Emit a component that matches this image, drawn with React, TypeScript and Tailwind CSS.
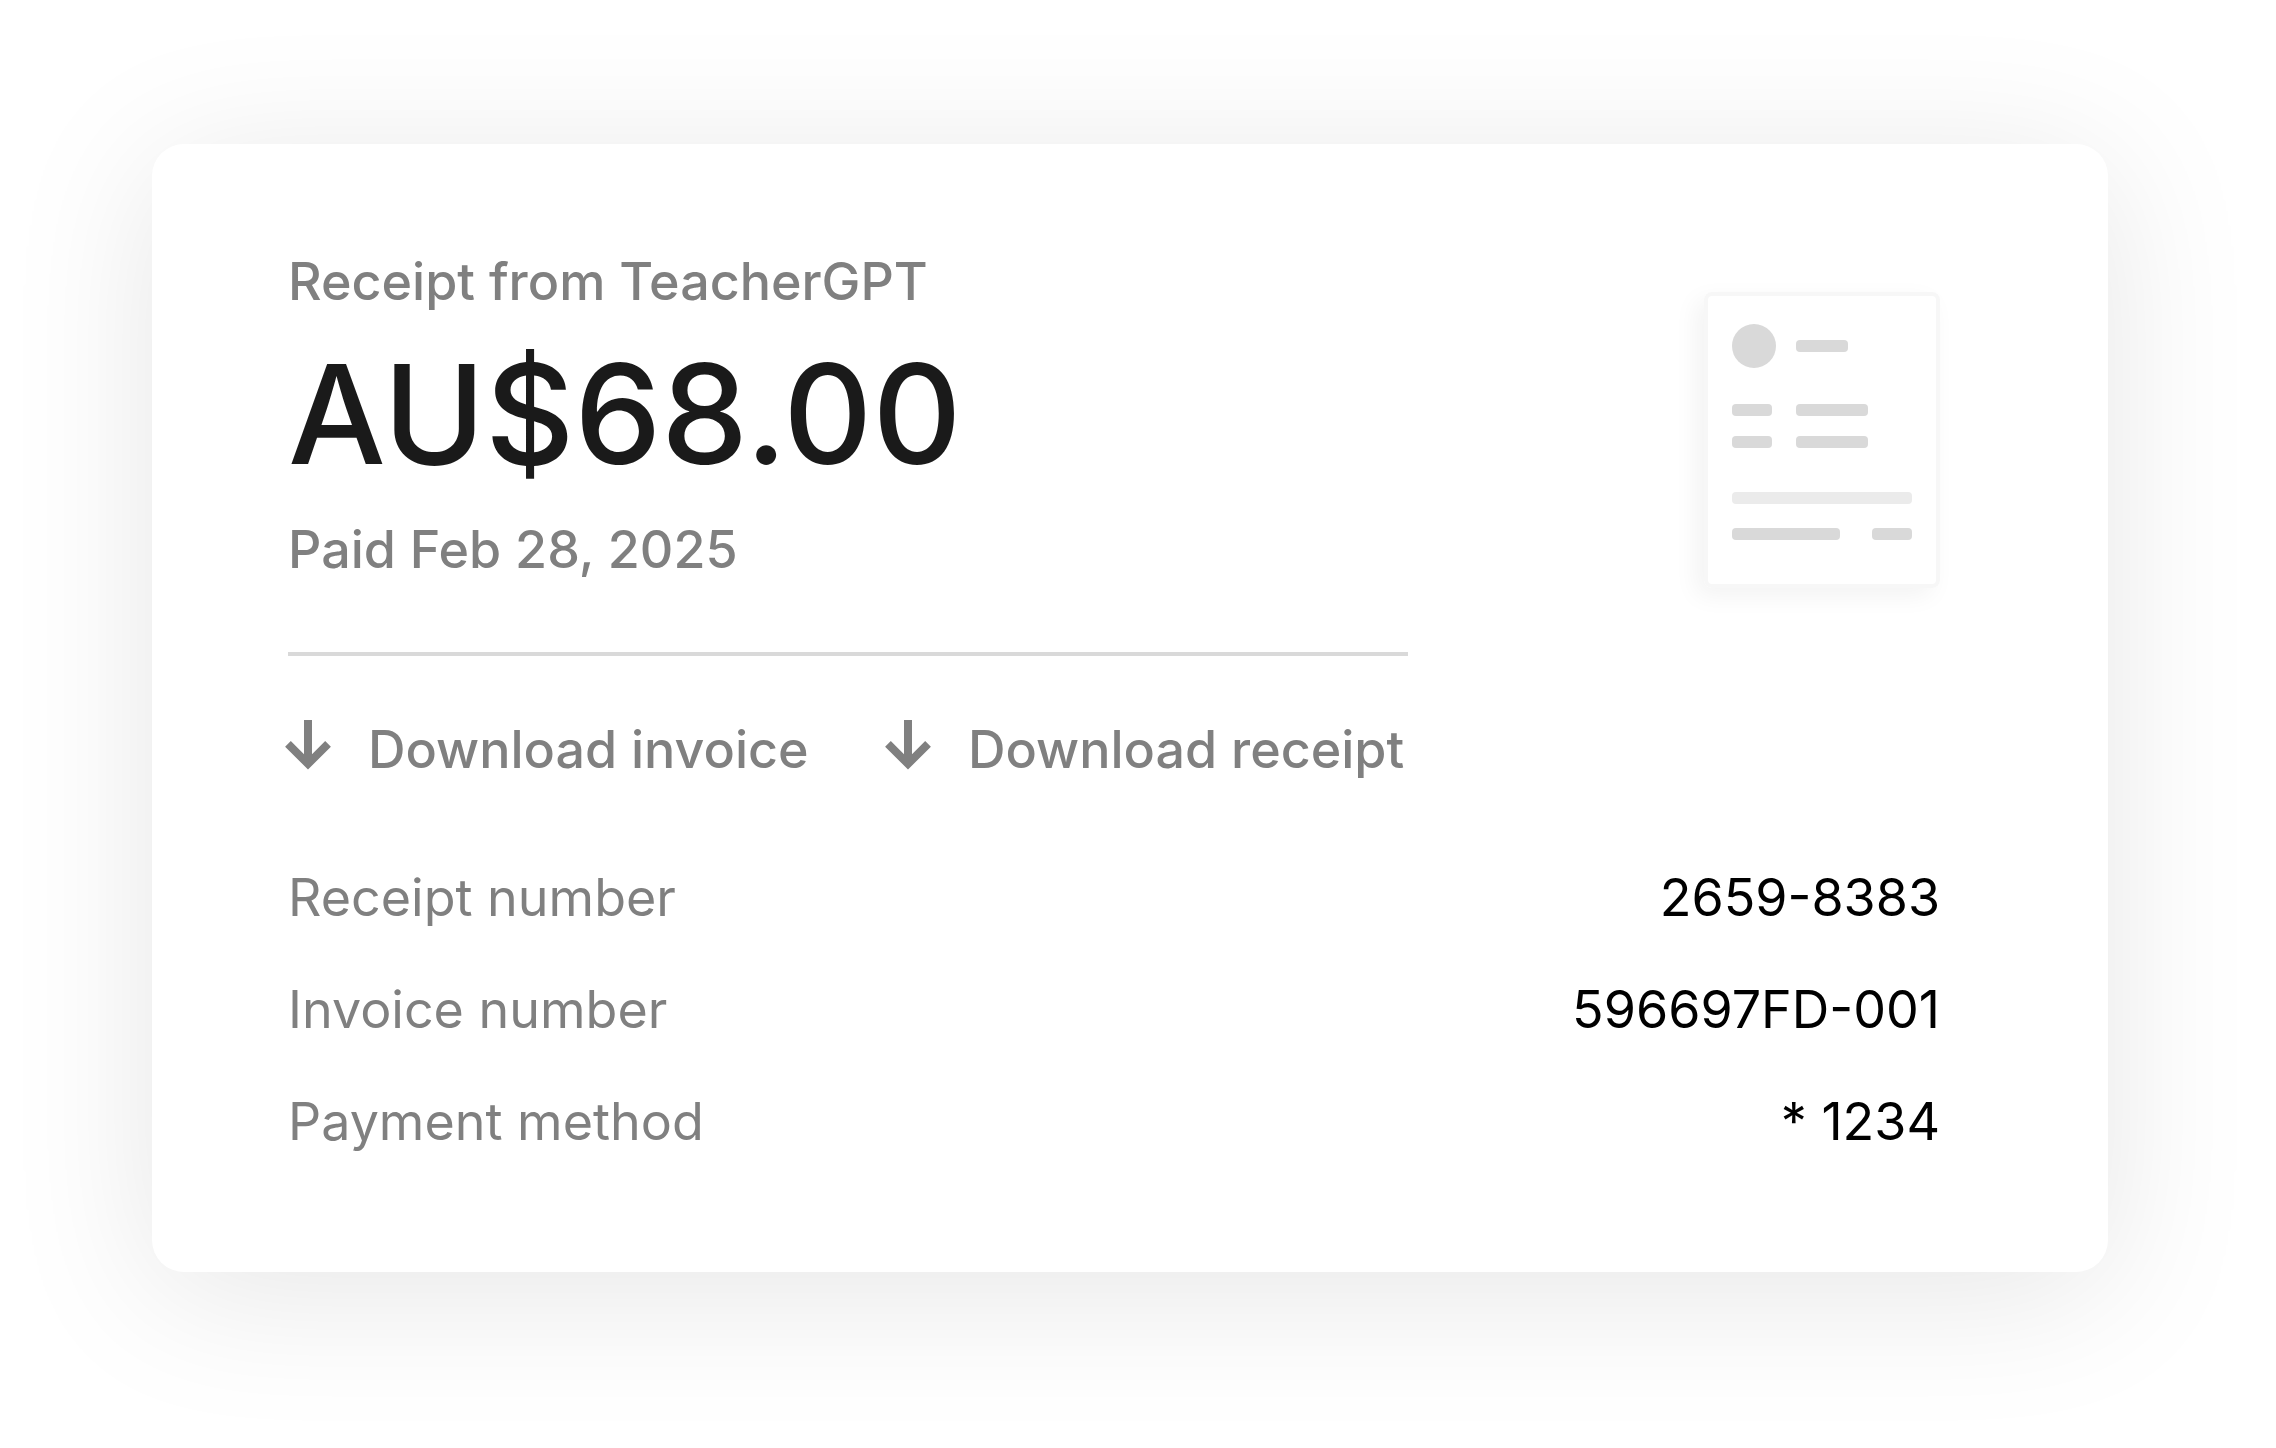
const details = [
  { label: "Receipt number", value: "2659-8383" },
  { label: "Invoice number", value: "596697FD-001" },
  { label: "Payment method", value: "* 1234" },
];

function DownArrow() {
  return (
    <svg aria-hidden="true" viewBox="0 0 40 64" className="h-16 w-10 shrink-0 overflow-visible" fill="#808080">
      <path d="M16 2h8v34.3l13.2-13.2 5.7 5.7L20 51.5-2.9 28.8l5.7-5.7L16 36.3z" />
    </svg>
  );
}

function DownloadLink({ children }: { children: string }) {
  return (
    <a href="#" className="flex items-center gap-10 font-medium whitespace-nowrap">
      <DownArrow />
      {children}
    </a>
  );
}

function ReceiptIllustration() {
  return (
    <div className="mt-[42px] shrink-0 rounded-lg shadow-[-8px_8px_24px_rgba(0,0,0,0.05)]">
      <svg aria-hidden="true" viewBox="0 0 236 296" className="w-[236px]">
        <rect width="236" height="296" rx="8" fill="#f7f7f7" />
        <rect x="4" y="4" width="228" height="288" rx="4" fill="#ffffff" />
        <g fill="#d9d9d9">
          <circle cx="50" cy="54" r="22" />
          <rect x="92" y="48" width="52" height="12" rx="4" />
          <rect x="28" y="112" width="40" height="12" rx="4" />
          <rect x="92" y="112" width="72" height="12" rx="4" />
          <rect x="28" y="144" width="40" height="12" rx="4" />
          <rect x="92" y="144" width="72" height="12" rx="4" />
          <rect x="28" y="236" width="108" height="12" rx="4" />
          <rect x="168" y="236" width="40" height="12" rx="4" />
        </g>
        <rect x="28" y="200" width="180" height="12" rx="4" fill="#ebebeb" />
      </svg>
    </div>
  );
}

export default function App() {
  return (
    <main className="min-h-screen bg-white px-[152px] pt-36 pb-44 font-['Inter',sans-serif] text-[52px] leading-16 text-[#808080]">
      <section className="mr-4 rounded-[32px] bg-white pt-[106px] pr-[168px] pb-[118px] pl-[136px] shadow-[0_20px_150px_rgba(0,0,0,0.1)]">
        <div className="flex items-start justify-between">
          <div className="w-[1120px]">
            <p className="font-medium">Receipt from TeacherGPT</p>
            <h1 className="mt-[30px] text-[138px] leading-[140px] font-medium text-[#1a1a1a]">AU$68.00</h1>
            <p className="mt-[34px] font-medium">Paid Feb 28, 2025</p>
            <div className="mt-[70px] grid grid-cols-2 gap-20 border-t-4 border-[#d9d9d9] pt-[62px]">
              <DownloadLink>Download invoice</DownloadLink>
              <DownloadLink>Download receipt</DownloadLink>
            </div>
          </div>
          <ReceiptIllustration />
        </div>
        <dl className="mt-[84px] flex flex-col gap-12">
          {details.map(({ label, value }) => (
            <div key={label} className="flex justify-between gap-8">
              <dt>{label}</dt>
              <dd className="text-black">{value}</dd>
            </div>
          ))}
        </dl>
      </section>
    </main>
  );
}
